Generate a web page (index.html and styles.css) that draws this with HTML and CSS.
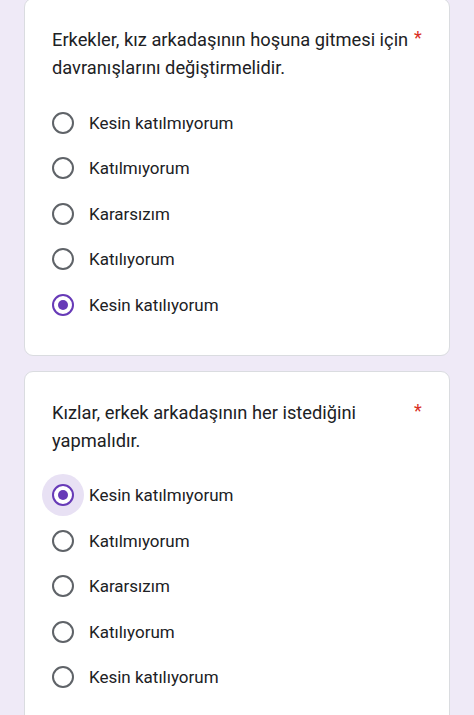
FILE: index.html
```html
<!DOCTYPE html>
<html lang="tr">
<head>
<meta charset="utf-8">
<link rel="stylesheet" href="styles.css">
</head>
<body>
<main class="page">
  <section class="card">
    <div class="question">
      <div class="title">Erkekler, kız arkadaşının hoşuna gitmesi için davranışlarını değiştirmelidir.</div>
      <span class="req">*</span>
    </div>
    <div class="options">
      <div class="option"><span class="radio"></span><span class="label">Kesin katılmıyorum</span></div>
      <div class="option"><span class="radio"></span><span class="label">Katılmıyorum</span></div>
      <div class="option"><span class="radio"></span><span class="label">Kararsızım</span></div>
      <div class="option"><span class="radio"></span><span class="label">Katılıyorum</span></div>
      <div class="option"><span class="radio checked"></span><span class="label">Kesin katılıyorum</span></div>
    </div>
  </section>
  <section class="card">
    <div class="question">
      <div class="title">Kızlar, erkek arkadaşının her istediğini yapmalıdır.</div>
      <span class="req">*</span>
    </div>
    <div class="options">
      <div class="option"><span class="radio checked focus"></span><span class="label">Kesin katılmıyorum</span></div>
      <div class="option"><span class="radio"></span><span class="label">Katılmıyorum</span></div>
      <div class="option"><span class="radio"></span><span class="label">Kararsızım</span></div>
      <div class="option"><span class="radio"></span><span class="label">Katılıyorum</span></div>
      <div class="option"><span class="radio"></span><span class="label">Kesin katılıyorum</span></div>
    </div>
  </section>
</main>
</body>
</html>
```
FILE: styles.css
```css
html, body {
  margin: 0;
  padding: 0;
  background: #efeaf7;
}
body {
  font-family: Roboto, "Noto Sans", Arial, sans-serif;
  color: #202124;
  overflow: hidden;
  height: 715px;
}
.page {
  display: flex;
  flex-direction: column;
  gap: 15px;
  padding: 0 24px 0 24px;
  margin-top: -2px;
}
.card {
  position: relative;
  z-index: 0;
  background: #ffffff;
  border: 1px solid #dadce0;
  border-radius: 9px;
  padding: 27px 27px 27px 27px;
}
.question {
  display: flex;
  align-items: flex-start;
  gap: 3px;
}
.title {
  flex: 1;
  font-size: 18.3px;
  line-height: 28px;
}
.req {
  color: #d93025;
  font-size: 18px;
  line-height: 24px;
  width: 8px;
}
.options {
  margin-top: 18px;
  display: flex;
  flex-direction: column;
}
.option {
  height: 45.5px;
  display: flex;
  align-items: center;
  gap: 15px;
}
.radio {
  position: relative;
  box-sizing: border-box;
  width: 22px;
  height: 22px;
  border: 2px solid #5f6368;
  border-radius: 50%;
  background: #ffffff;
  flex: none;
}
.radio.checked {
  border-color: #673ab7;
}
.radio.checked::after {
  content: "";
  position: absolute;
  left: 4px;
  top: 4px;
  width: 10px;
  height: 10px;
  border-radius: 50%;
  background: #673ab7;
}
.radio.focus::before {
  content: "";
  position: absolute;
  z-index: -1;
  left: -12px;
  top: -12px;
  width: 42px;
  height: 42px;
  border-radius: 50%;
  background: #e8e1f4;
}
.label {
  font-size: 17px;
  line-height: 22px;
}
```
